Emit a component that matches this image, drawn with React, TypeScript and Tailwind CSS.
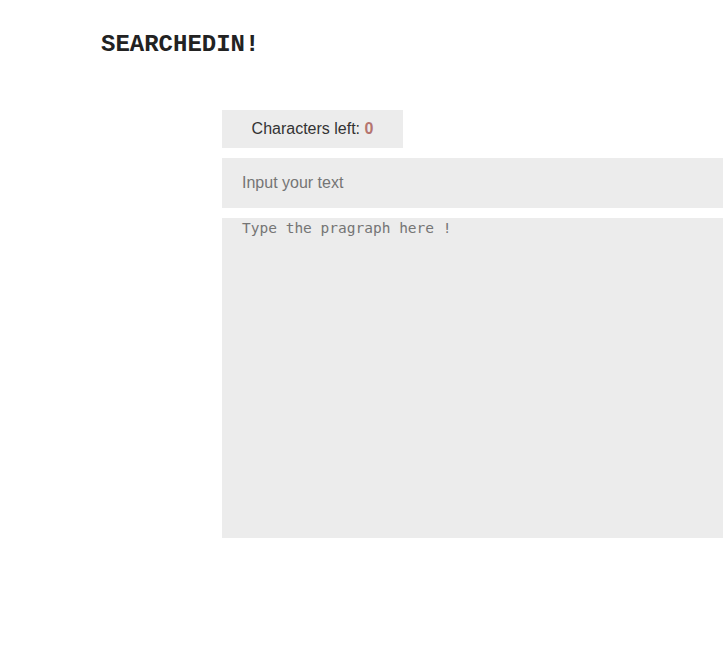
import React, { useState } from "react";

const App = () => {
  const [title, setTitle] = useState("");
  const [text, setText] = useState("");
  const left = Math.max(0, 0 - text.length);

  return (
    <div className="min-h-[652px] bg-white overflow-hidden">
      <h1 className="pl-[101px] pt-[33px] text-[24px] leading-[24px] font-bold text-[#222] font-['Liberation_Mono','Courier_New',monospace]">
        SEARCHEDIN!
      </h1>

      <div className="ml-[222px] mt-[53px] flex flex-col gap-[10px] font-['Liberation_Sans',Arial,sans-serif]">
        <div className="w-[181px] h-[38px] bg-[#ececec] flex items-center justify-center text-[16px] text-[#333]">
          Characters left:&nbsp;<span className="font-bold text-[#b5746f]">{left}</span>
        </div>

        <input
          value={title}
          onChange={(e) => setTitle(e.target.value)}
          placeholder="Input your text"
          className="w-[501px] h-[50px] bg-[#ececec] px-[20px] text-[16px] text-[#333] placeholder:text-[#757575] outline-none"
        />

        <textarea
          value={text}
          onChange={(e) => setText(e.target.value)}
          placeholder="Type the pragraph here !"
          className="w-[501px] h-[320px] bg-[#ececec] px-[20px] pt-0 text-[14.5px] leading-[20px] text-[#333] placeholder:text-[#757575] outline-none resize-none font-['DejaVu_Sans_Mono',Consolas,monospace]"
        />
      </div>
    </div>
  );
};

export default App;
